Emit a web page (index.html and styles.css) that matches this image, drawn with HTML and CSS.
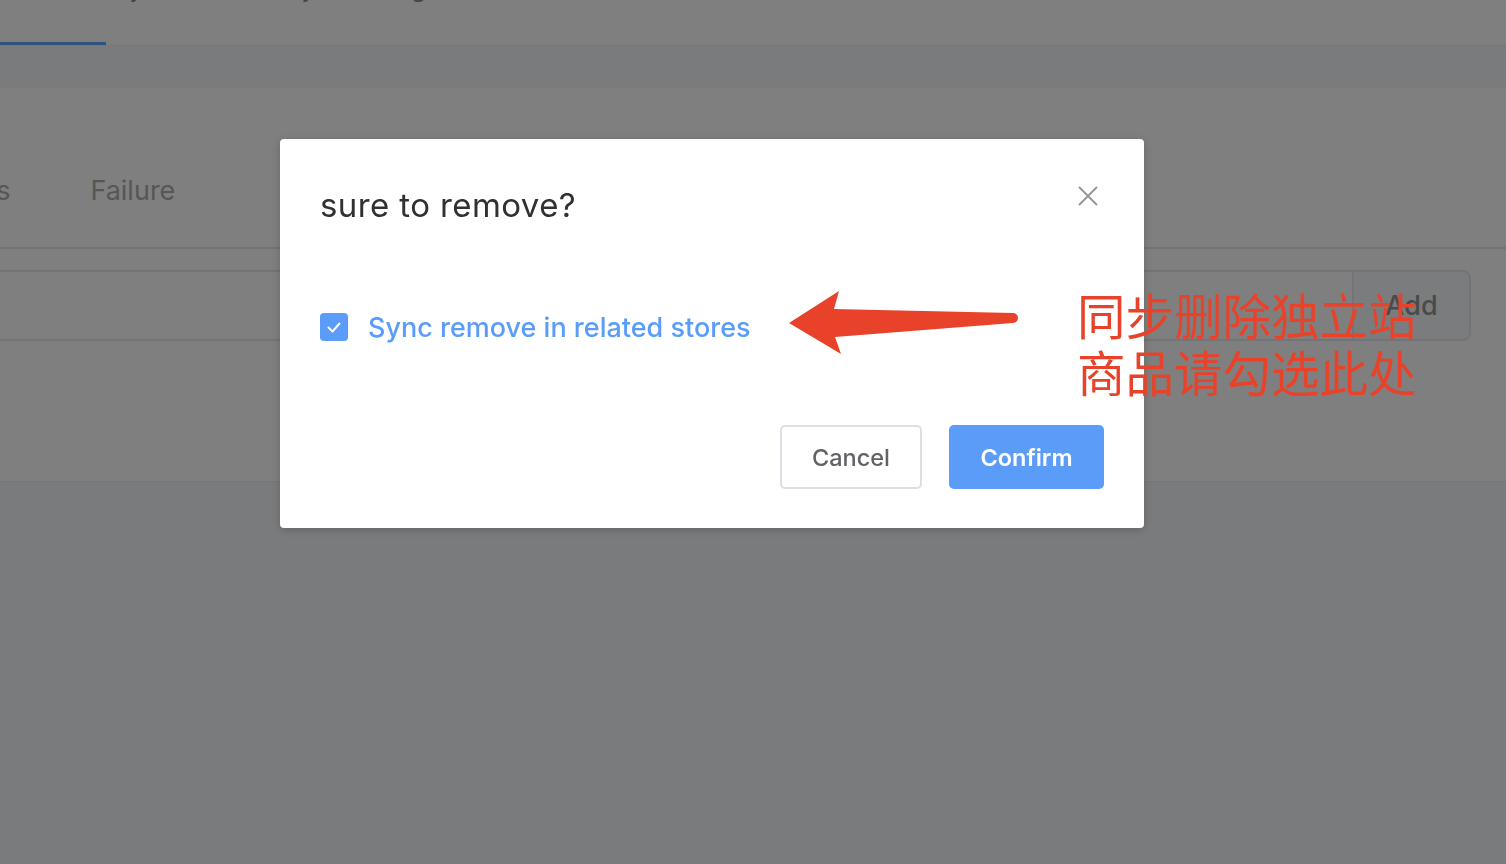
FILE: index.html
```html
<!DOCTYPE html>
<html lang="en">
<head>
<meta charset="utf-8">
<title>sure to remove?</title>
<link rel="stylesheet" href="styles.css">
</head>
<body>
  <div class="page">
    <header class="topnav">
      <div class="topnav-tab is-active"><span class="topnav-label">Stores</span></div>
      <div class="topnav-tab"><span class="topnav-label">Synced</span></div>
      <div class="topnav-tab topnav-tab-wide"><span class="topnav-label">Sync setting</span></div>
    </header>
    <div class="band"></div>
    <section class="card">
      <div class="tabs">
        <span class="tab tab-first">Success</span>
        <span class="tab">Failure</span>
      </div>
      <div class="add-row">
        <div class="add-input"></div>
        <button class="add-btn" type="button">Add</button>
      </div>
    </section>
  </div>

  <div class="mask"></div>

  <div class="dialog-layer">
    <div class="dialog" role="dialog">
      <div class="dialog-header">
        <span class="dialog-title">sure to remove?</span>
        <button class="dialog-close" type="button" aria-label="Close">
          <svg viewBox="0 0 20 20" width="20" height="20"><path d="M1 1 L19 19 M19 1 L1 19" stroke="#909399" stroke-width="1.8" fill="none"/></svg>
        </button>
      </div>
      <div class="dialog-body">
        <label class="check">
          <span class="check-box">
            <svg viewBox="0 0 28 28" width="28" height="28"><path d="M8.5 14.5 L12.5 18.5 L19.5 10.5" stroke="#fff" stroke-width="2" fill="none" stroke-linecap="round" stroke-linejoin="round"/></svg>
          </span>
          <span class="check-label">Sync remove in related stores</span>
        </label>
      </div>
      <div class="dialog-footer">
        <button class="btn btn-default" type="button">Cancel</button>
        <button class="btn btn-primary" type="button">Confirm</button>
      </div>
    </div>
  </div>

  <svg class="annot-arrow" viewBox="0 0 245 75" width="245" height="75">
    <path d="M9 38 L59 6 L54 24 L233 28 A5 5 0 0 1 233 38 L55 52 L61 69 Z" fill="#e8432a"/>
  </svg>
  <div class="annot-note">同步删除独立站<br>商品请勾选此处</div>
</body>
</html>
```

FILE: styles.css
```css
* { box-sizing: border-box; }

html, body {
  margin: 0;
  padding: 0;
  height: 100%;
}

body {
  background: #f4f6fa;
  font-family: Inter, "Liberation Sans", "Noto Sans CJK SC", sans-serif;
  overflow: hidden;
}

.page {
  display: flex;
  flex-direction: column;
}

/* top navigation, scrolled so only descenders are visible */
.topnav {
  height: 46px;
  background: #ffffff;
  display: flex;
  overflow: hidden;
  border-bottom: 1px solid #eceef2;
}

.topnav-tab {
  width: 106px;
  height: 45px;
  overflow: hidden;
  border-bottom: 3px solid transparent;
}

.topnav-tab.is-active {
  border-bottom-color: #5ea4ff;
}

.topnav-tab:nth-child(2) { width: 180px; padding-left: 8px; }
.topnav-tab-wide { width: 220px; padding-left: 0; }

.topnav-label {
  display: block;
  margin-top: -24px;
  font-size: 24px;
  line-height: 26px;
  color: #8a8a8a;
  white-space: nowrap;
}

.band {
  height: 42px;
}

.card {
  background: #ffffff;
  height: 394px;
  padding-top: 83px;
  border-bottom: 1px solid #eef0f4;
}

.tabs {
  display: flex;
  gap: 80px;
  margin-left: -98px;
  padding-bottom: 36px;
  border-bottom: 2px solid #e8e8e8;
}

.tab {
  font-size: 27px;
  line-height: 40px;
  color: #acacac;
}

.add-row {
  display: flex;
  margin: 21px 35px 0 -20px;
  height: 71px;
}

.add-input {
  flex: 1;
  border: 2px solid #e6e8ee;
  border-right: none;
  border-radius: 4px 0 0 4px;
}

.add-btn {
  width: 119px;
  border: 2px solid #e6e8ee;
  border-radius: 0 8px 8px 0;
  background: #f6f8fc;
  font-family: inherit;
  font-size: 27px;
  font-weight: 500;
  color: #959595;
}

/* overlay */
.mask {
  position: fixed;
  inset: 0;
  background: rgba(0, 0, 0, 0.5);
}

.dialog-layer {
  position: fixed;
  inset: 0;
  padding: 139px 0 0 280px;
}

.dialog {
  position: relative;
  width: 864px;
  background: #ffffff;
  border-radius: 4px;
  box-shadow: 0 2px 10px rgba(0, 0, 0, 0.2);
}

.dialog-header {
  padding: 46px 40px 0;
}

.dialog-title {
  display: block;
  font-size: 33px;
  letter-spacing: 0.4px;
  line-height: 40px;
  color: #303133;
}

.dialog-close {
  position: absolute;
  top: 47px;
  right: 46px;
  width: 20px;
  height: 20px;
  padding: 0;
  border: none;
  background: none;
  display: flex;
}

.dialog-body {
  padding: 82px 40px 0;
}

.check {
  display: flex;
  align-items: center;
  gap: 20px;
  height: 40px;
}

.check-box {
  width: 28px;
  height: 28px;
  border-radius: 4px;
  background: #5b9cf9;
  display: flex;
}

.check-label {
  font-size: 27px;
  font-weight: 500;
  color: #5b9cf9;
}

.dialog-footer {
  display: flex;
  justify-content: flex-end;
  gap: 27px;
  padding: 78px 40px 39px;
}

.btn {
  height: 64px;
  border-radius: 5px;
  font-family: inherit;
  font-size: 23.5px;
  font-weight: 500;
}

.btn-default {
  width: 142px;
  background: #ffffff;
  border: 2px solid #dcdfe6;
  color: #606266;
}

.btn-primary {
  width: 155px;
  background: #5b9cf9;
  border: none;
  color: #ffffff;
  font-weight: 600;
}

/* red hand-drawn annotation */
.annot-arrow {
  position: fixed;
  left: 780px;
  top: 285px;
}

.annot-note {
  position: fixed;
  left: 1077px;
  top: 286px;
  font-family: "Noto Sans CJK SC", sans-serif;
  font-size: 48.5px;
  line-height: 57px;
  color: #e8432a;
  white-space: nowrap;
}
```
